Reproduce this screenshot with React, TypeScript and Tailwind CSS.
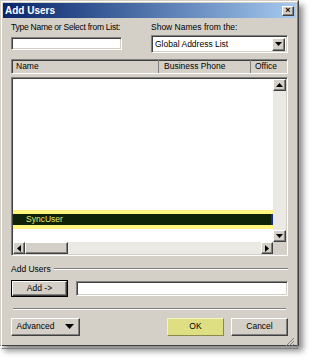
const font = { fontFamily: '"Liberation Sans", Arial, sans-serif' };

function Arrow({ dir }: { dir: 'up' | 'down' | 'left' | 'right' }) {
  const pts = {
    up: '0,4 7,4 3.5,0',
    down: '0,0 7,0 3.5,4',
    left: '4,0 4,7 0,3.5',
    right: '0,0 0,7 4,3.5',
  }[dir];
  const vertical = dir === 'up' || dir === 'down';
  return (
    <svg width={vertical ? 7 : 4} height={vertical ? 4 : 7} viewBox={vertical ? '0 0 7 4' : '0 0 4 7'}>
      <polygon points={pts} fill="#000" />
    </svg>
  );
}

const raised =
  'border border-t-white border-l-white border-b-[#404040] border-r-[#404040] shadow-[inset_-1px_-1px_0_#808080] bg-[#d4d0c8]';
const sunken =
  'border border-t-[#808080] border-l-[#808080] border-b-white border-r-white shadow-[inset_1px_1px_0_#404040,inset_-1px_-1px_0_#d4d0c8]';

export default function App() {
  return (
    <div className="w-[312px] h-[360px] bg-white overflow-hidden" style={font}>
      <div className="w-[299px] h-[346px] bg-[#d4d0c8] border border-t-[#d4d0c8] border-l-[#d4d0c8] border-b-[#404040] border-r-[#404040] shadow-[4px_5px_6px_rgba(0,0,0,0.45)] flex flex-col">
        <div className="flex-1 flex flex-col border border-t-white border-l-white border-b-[#808080] border-r-[#808080] p-px">
          {/* title bar */}
          <div className="h-[15px] flex items-center justify-between pl-[2px] pr-[2px] bg-gradient-to-r from-[#0a246a] to-[#a6caf0]">
            <span className="text-white font-bold text-[10px] leading-none">Add Users</span>
            <div className={`${raised} w-[12px] h-[10px] flex items-center justify-center text-[9px] font-bold leading-none text-black`}>
              ×
            </div>
          </div>

          <div className="px-[8px] pt-[5px] flex flex-col text-[8.5px] text-black leading-none whitespace-nowrap">
            {/* search row */}
            <div className="flex gap-[29px]">
              <div className="flex flex-col w-[111px]">
                <span className="h-[10px] tracking-[-0.25px]">Type Name or Select from List:</span>
                <div className={`${sunken} bg-white h-[13px] mt-[4px]`} />
              </div>
              <div className="flex flex-col flex-1">
                <span className="h-[10px]">Show Names from the:</span>
                <div className={`${sunken} bg-white h-[18px] mt-[2px] flex items-center justify-between pl-[3px] pr-[2px]`}>
                  <span>Global Address List</span>
                  <div className={`${raised} w-[13px] h-[13px] flex items-center justify-center`}>
                    <Arrow dir="down" />
                  </div>
                </div>
              </div>
            </div>

            {/* list header */}
            <div className={`${sunken} mt-[6px] h-[15px] flex bg-[#d4d0c8]`}>
              <div className="w-[147px] flex items-center pl-[4px] border-r border-r-[#808080]">Name</div>
              <div className="w-[92px] flex items-center pl-[5px] border-r border-r-[#808080]">Business Phone</div>
              <div className="flex-1 flex items-center pl-[4px]">Office</div>
            </div>

            {/* list body */}
            <div className={`${sunken} mt-[3px] h-[179px] flex flex-col bg-white p-px`}>
              <div className="flex flex-1">
                <div className="flex-1 flex flex-col justify-end pb-[13px]">
                  <div className="bg-[#fff57f] py-[4px]">
                    <div className="h-[11px] bg-[#0d2206] flex items-center pl-[13px] text-[#e6e67a] border-r-[2px] border-r-[#1c2c8c]">
                      SyncUser
                    </div>
                  </div>
                </div>
                <div className="w-[13px] bg-[#ebe9e3] flex flex-col justify-between">
                  <div className={`${raised} h-[12px] flex items-center justify-center`}>
                    <Arrow dir="up" />
                  </div>
                  <div className={`${raised} h-[12px] flex items-center justify-center`}>
                    <Arrow dir="down" />
                  </div>
                </div>
              </div>
              <div className="h-[12px] flex">
                <div className="flex-1 flex bg-[#ebe9e3]">
                  <div className={`${raised} w-[12px] flex items-center justify-center`}>
                    <Arrow dir="left" />
                  </div>
                  <div className={`${raised} w-[43px]`} />
                  <div className="flex-1" />
                  <div className={`${raised} w-[12px] flex items-center justify-center`}>
                    <Arrow dir="right" />
                  </div>
                </div>
                <div className="w-[13px] bg-[#d4d0c8]" />
              </div>
            </div>

            {/* add users group */}
            <div className="mt-[9px] flex items-center gap-[3px]">
              <span>Add Users</span>
              <div className="flex-1 h-[2px] border-t border-t-[#808080] border-b border-b-white" />
            </div>
            <div className="mt-[6px] flex items-center gap-[8px]">
              <div className="w-[57px] h-[17px] border border-black flex">
                <div className={`${raised} flex-1 flex items-center justify-center`}>Add -&gt;</div>
              </div>
              <div className={`${sunken} bg-white flex-1 h-[15px]`} />
            </div>

            <div className="mt-[11px] mx-[2px] h-[2px] border-t border-t-[#808080] border-b border-b-white" />

            {/* bottom buttons */}
            <div className="mt-[8px] flex items-center">
              <div className={`${raised} w-[69px] h-[18px] flex items-center justify-center gap-[11px]`}>
                <span>Advanced</span>
                <svg width="9" height="5" viewBox="0 0 9 5">
                  <polygon points="0,0 9,0 4.5,5" fill="#000" />
                </svg>
              </div>
              <div className="flex-1" />
              <div className="w-[57px] h-[18px] flex items-center justify-center bg-[#dede82] border border-t-[#f4f4c0] border-l-[#f4f4c0] border-b-[#8a8a50] border-r-[#8a8a50]">
                OK
              </div>
              <div className={`${raised} ml-[7px] w-[57px] h-[18px] flex items-center justify-center`}>Cancel</div>
            </div>
            <div className="flex justify-end mt-[1px] -mr-[7px]">
              <svg width="10" height="10" viewBox="0 0 10 10">
                <path d="M9 1 L1 9 M9 4 L4 9 M9 7 L7 9" stroke="#808080" strokeWidth="1" />
              </svg>
            </div>
          </div>
        </div>
      </div>
    </div>
  );
}
